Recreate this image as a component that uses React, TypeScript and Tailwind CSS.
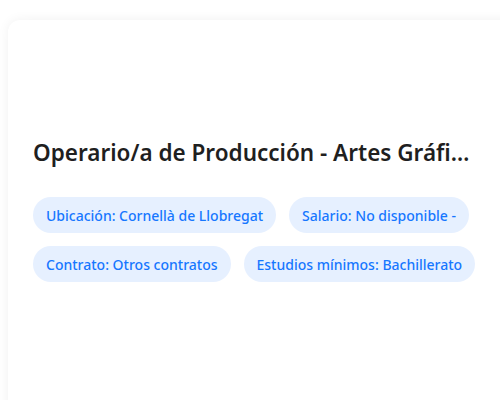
import React from "react";

const chips = [
  "Ubicación: Cornellà de Llobregat",
  "Salario: No disponible -",
  "Contrato: Otros contratos",
  "Estudios mínimos: Bachillerato",
];

export default function App() {
  return (
    <div className="w-[500px] h-[400px] overflow-hidden bg-white pt-[20px] pl-[8px]" style={{ fontFamily: '"Noto Sans", "Open Sans", sans-serif' }}>
      <div className="w-[520px] h-[420px] rounded-[12px] bg-white shadow-[0_0_12px_rgba(0,0,0,0.06)] px-[25px] pt-[115px]">
        <div className="w-[442px] truncate text-[22.5px] font-semibold leading-[36px] text-[#1f1f1f]">
          Operario/a de Producción - Artes Gráficas
        </div>
        <div className="mt-[26px] w-[450px] flex flex-wrap gap-x-[13px] gap-y-[13px]">
          {chips.map((c) => (
            <span key={c} className="h-[36px] flex items-center rounded-full bg-[#e6f0ff] px-[13px] text-[14px] font-medium text-[#1677ff]">
              {c}
            </span>
          ))}
        </div>
      </div>
    </div>
  );
}
